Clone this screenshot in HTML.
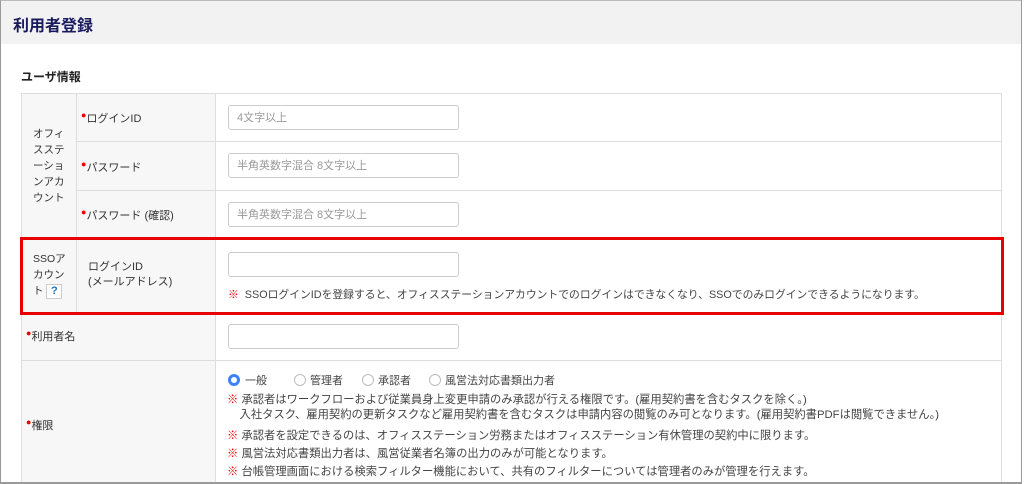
<!DOCTYPE html>
<html><head><meta charset="utf-8"><style>
*{margin:0;padding:0;box-sizing:border-box}
body{width:1024px;height:484px;overflow:hidden;background:#fff;font-family:"Liberation Sans","Noto Sans CJK JP",sans-serif;color:#333;position:relative}
.frame{position:absolute;left:0;top:0;width:1023px;height:483px;border:1px solid #9a9a9a;border-top-color:#bbb}
.hdr{position:absolute;left:1px;top:1px;width:1021px;height:43px;background:#f2f2f2}
.hdr h1{position:absolute;left:12px;top:11px;font-size:16px;font-weight:bold;color:#1a1a5e}
.sec{position:absolute;left:21px;top:68px;font-size:12px;font-weight:bold;color:#222}
.a{position:absolute}
.cell{position:absolute;border:1px solid #ddd}
.g{background:#f7f7f7}
.t{position:absolute;font-size:11px;color:#333;white-space:nowrap}
.dot{color:#e00;font-size:9px;position:relative;top:-4px}
.in{position:absolute;left:228px;width:231px;height:25px;border:1px solid #ccc;border-radius:3px;background:#fff;font-size:11px;color:#999;padding:3px 0 0 8px}
.n{position:absolute;left:227px;font-size:11.3px;color:#444;white-space:nowrap}
.n b{color:#e00;font-weight:normal}
.r{position:absolute;top:374px;width:12px;height:12px;border:1px solid #bbb;border-radius:50%}
.r.on{border:3.5px solid #3b82f6}
.rl{position:absolute;top:372px;font-size:11px;color:#444}
</style></head><body>
<div class="frame"></div>
<div class="hdr"><h1>利用者登録</h1></div>
<div class="sec">ユーザ情報</div>

<div class="cell g" style="left:21px;top:93px;width:56px;height:146px"></div>
<div class="cell g" style="left:76px;top:93px;width:140px;height:49px"></div>
<div class="cell g" style="left:76px;top:141px;width:140px;height:50px"></div>
<div class="cell g" style="left:76px;top:190px;width:140px;height:49px"></div>
<div class="cell" style="left:215px;top:93px;width:787px;height:49px"></div>
<div class="cell" style="left:215px;top:141px;width:787px;height:50px"></div>
<div class="cell" style="left:215px;top:190px;width:787px;height:49px"></div>
<div class="cell g" style="left:21px;top:238px;width:56px;height:76px"></div>
<div class="cell g" style="left:76px;top:238px;width:140px;height:76px"></div>
<div class="cell" style="left:215px;top:238px;width:787px;height:76px"></div>
<div class="cell g" style="left:21px;top:313px;width:195px;height:48px"></div>
<div class="cell" style="left:215px;top:313px;width:787px;height:48px"></div>
<div class="cell g" style="left:21px;top:360px;width:195px;height:122px;border-bottom:none"></div>
<div class="cell" style="left:215px;top:360px;width:787px;height:122px;border-bottom:none"></div>
<div class="a" style="left:20px;top:237px;width:984px;height:78px;border:3px solid #e60000"></div>

<div class="t" style="left:33px;top:126px;line-height:16px;white-space:normal;width:40px;font-size:10.5px">オフィ<br>スステ<br>ーショ<br>ンアカ<br>ウント</div>
<div class="t" style="left:81px;top:110px"><span class="dot">●</span>ログインID</div>
<div class="t" style="left:81px;top:159px"><span class="dot">●</span>パスワード</div>
<div class="t" style="left:81px;top:207px"><span class="dot">●</span>パスワード (確認)</div>
<div class="in" style="top:105px">4文字以上</div>
<div class="in" style="top:153px">半角英数字混合 8文字以上</div>
<div class="in" style="top:202px">半角英数字混合 8文字以上</div>

<div class="t" style="left:33px;top:251px;line-height:16px;font-size:10.5px">SSOア<br>カウン<br>ト <span style="display:inline-block;width:16px;height:15px;border:1px solid #ccc;background:#fff;color:#1a73c8;font-weight:bold;text-align:center;line-height:13px;font-size:11px">?</span></div>
<div class="t" style="left:88px;top:260px;line-height:15px">ログインID<br>(メールアドレス)</div>
<div class="in" style="top:252px"></div>
<div class="n" style="left:228px;top:286px;font-size:10.8px"><b>※</b>&nbsp; SSOログインIDを登録すると、オフィスステーションアカウントでのログインはできなくなり、SSOでのみログインできるようになります。</div>

<div class="t" style="left:26px;top:328px"><span class="dot">●</span>利用者名</div>
<div class="in" style="top:324px"></div>

<div class="t" style="left:26px;top:417px"><span class="dot">●</span>権限</div>
<div class="r on" style="left:228px"></div><div class="rl" style="left:245px">一般</div>
<div class="r" style="left:294px"></div><div class="rl" style="left:310px">管理者</div>
<div class="r" style="left:362px"></div><div class="rl" style="left:378px">承認者</div>
<div class="r" style="left:429px"></div><div class="rl" style="left:445px">風営法対応書類出力者</div>
<div class="n" style="top:393px;line-height:15px"><b>※</b> 承認者はワークフローおよび従業員身上変更申請のみ承認が行える権限です。(雇用契約書を含むタスクを除く。)<br>&nbsp;&nbsp;&nbsp; 入社タスク、雇用契約の更新タスクなど雇用契約書を含むタスクは申請内容の閲覧のみ可となります。(雇用契約書PDFは閲覧できません。)</div>
<div class="n" style="top:427px"><b>※</b> 承認者を設定できるのは、オフィスステーション労務またはオフィスステーション有休管理の契約中に限ります。</div>
<div class="n" style="top:445px"><b>※</b> 風営法対応書類出力者は、風営従業者名簿の出力のみが可能となります。</div>
<div class="n" style="top:463px"><b>※</b> 台帳管理画面における検索フィルター機能において、共有のフィルターについては管理者のみが管理を行えます。</div>
<div class="a" style="left:0;top:482px;width:1024px;height:2px;background:#9a9a9a"></div>
<div class="a" style="left:1021px;top:0;width:3px;height:484px;background:#fff;border-left:1px solid #9a9a9a"></div>
</body></html>
